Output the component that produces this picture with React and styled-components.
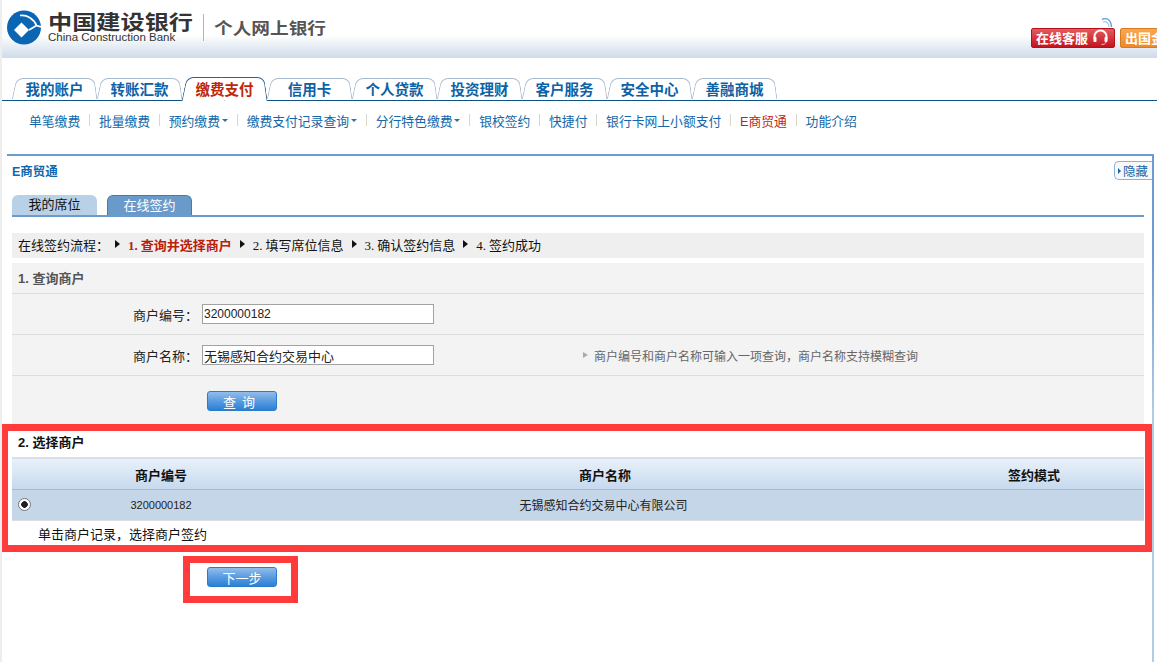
import React from "react";
import styled, { createGlobalStyle } from "styled-components";

const GlobalStyle = createGlobalStyle`
  html, body {
    margin: 0;
    padding: 0;
    background: #fff;
    overflow: hidden;
  }
  body {
    font-family: "Liberation Sans", "Noto Sans CJK SC", sans-serif;
    font-size: 13px;
    color: #222;
  }
`;

const Page = styled.div`
  width: 1155px;
  height: 662px;
  border-left: 2px solid #eee;
  overflow: hidden;
`;

const Header = styled.header`
  display: flex;
  height: 58px;
  background: linear-gradient(#fff 60%, #cedbe9);
`;

const Brand = styled.div`
  display: flex;
  align-items: flex-start;
  padding: 10px 0 0 5px;
`;

const BrandText = styled.div`
  width: 145px;
  margin-left: 7px;
  padding-top: 3px;
  display: flex;
  flex-direction: column;
`;

const BrandCn = styled.div`
  font-family: "Noto Sans CJK SC", sans-serif;
  font-size: 20px;
  line-height: 18px;
  font-weight: 700;
  color: #333;
  white-space: nowrap;
  transform: scaleX(1.208);
  transform-origin: left;
`;

const BrandEn = styled.div`
  margin-top: 1px;
  font-size: 11.5px;
  line-height: 10px;
  color: #333;
  white-space: nowrap;
`;

const BrandDivider = styled.div`
  width: 1px;
  height: 27px;
  margin: 4px 10px 0 10px;
  background: #b5b5b5;
`;

const BrandSub = styled.div`
  width: 112px;
  font-family: "Noto Sans CJK SC", sans-serif;
  font-size: 16px;
  line-height: 26px;
  margin-top: 4px;
  font-weight: 700;
  color: #555;
  white-space: nowrap;
  transform: scaleX(1.167);
  transform-origin: left;
`;

const Services = styled.div`
  position: relative;
  margin-left: auto;
  width: 126px;
  padding-top: 28px;
  display: flex;
  gap: 5px;
  overflow: hidden;
`;

const Signal = styled.svg`
  position: absolute;
  left: 70px;
  top: 17px;
`;

const ServiceBtn = styled.div`
  flex-shrink: 0;
  display: flex;
  align-items: center;
  gap: 4px;
  box-sizing: border-box;
  height: 20px;
  width: 84px;
  padding: 0 0 2px 4px;
  border: 1px solid ${(p) => (p.$orange ? "#d87a20" : "#b8101a")};
  border-radius: 2px;
  background: ${(p) =>
    p.$orange
      ? "linear-gradient(#f8a850, #ee8a28)"
      : "linear-gradient(#e45a5e, #c4141e)"};
  color: #fff;
  font-size: 13px;
  font-weight: 700;
  white-space: nowrap;
`;

const Tabs = styled.nav`
  display: flex;
  height: 22px;
  margin-top: 20px;
  padding-left: 10px;
  border-bottom: 1px solid #0f5288;
`;

const Tab = styled.a`
  position: relative;
  width: 85px;
  height: ${(p) => (p.$active ? "23px" : "22px")};
  line-height: 25px;
  text-align: center;
  font-size: 14.5px;
  font-weight: 700;
  color: ${(p) => (p.$active ? "#c0260c" : "#0b62a6")};
  z-index: ${(p) => (p.$active ? 1 : 0)};

  &::before,
  &::after {
    content: "";
    position: absolute;
    top: ${(p) => (p.$active ? "-1px" : "0")};
    bottom: ${(p) => (p.$active ? "0" : "1px")};
    width: 50%;
    box-sizing: border-box;
    border-top: 1px solid ${(p) => (p.$active ? "#2f5f8e" : "#a6bace")};
    background: #fff;
    z-index: -1;
  }
  &::before {
    left: 2px;
    border-left: 1px solid ${(p) => (p.$active ? "#2f5f8e" : "#a6bace")};
    border-top-left-radius: 7px;
    transform: skewX(-12deg);
  }
  &::after {
    right: 2px;
    border-right: 1px solid ${(p) => (p.$active ? "#2f5f8e" : "#a6bace")};
    border-top-right-radius: 7px;
    transform: skewX(8deg);
  }
`;

const SubNav = styled.div`
  display: flex;
  align-items: center;
  height: 38px;
  padding: 0 0 0 27px;
`;

const SubItem = styled.a`
  display: flex;
  align-items: center;
  font-size: 12.8px;
  color: ${(p) => (p.$active ? "#c0260c" : "#1467a8")};
  white-space: nowrap;
`;

const Caret = styled.i`
  width: 0;
  height: 0;
  margin-left: 2px;
  border-left: 3px solid transparent;
  border-right: 3px solid transparent;
  border-top: 3px solid #3a6f9e;
`;

const SubSep = styled.span`
  width: 1px;
  height: 12px;
  margin: 0 8.85px;
  background: linear-gradient(#cfd8e4, #e0d8b0);
`;

const Panel = styled.section`
  position: relative;
  box-sizing: border-box;
  width: 1147px;
  height: 600px;
  margin: 15px 0 0 5px;
  padding: 0 10px 0 5px;
  border-top: 2px solid #6c9bcc;

  &::after {
    content: "";
    position: absolute;
    top: 0;
    right: 0;
    bottom: 0;
    width: 2px;
    background: linear-gradient(#6c9bcc 100px, #b0cce8 260px);
  }
`;

const PanelTitle = styled.h2`
  margin: 0;
  height: 39px;
  line-height: 32px;
  font-size: 12.5px;
  font-weight: 700;
  color: #0f68ae;
`;

const HideBtn = styled.a`
  position: absolute;
  top: 5px;
  right: 2px;
  box-sizing: border-box;
  width: 38px;
  height: 19px;
  display: flex;
  align-items: center;
  padding-left: 3px;
  gap: 2px;
  border: 1px solid #8fb0d2;
  border-right: none;
  border-radius: 5px 0 0 5px;
  background: #f8f8f8;
  color: #1467a8;
  font-size: 12.5px;
`;

const HideArrow = styled.i`
  width: 0;
  height: 0;
  border-top: 3px solid transparent;
  border-bottom: 3px solid transparent;
  border-left: 3px solid #1467a8;
`;

const SubTabs = styled.div`
  display: flex;
  gap: 10px;
  height: 20px;
  border-bottom: 2px solid #6c9bcc;
`;

const SubTab = styled.a`
  box-sizing: border-box;
  width: 85px;
  height: 20px;
  line-height: 19px;
  text-align: center;
  border-radius: 6px 6px 0 0;
  background: ${(p) => (p.$active ? "#6a9aca" : "#b9d1e7")};
  border: ${(p) => (p.$active ? "1px solid #4a7ba8" : "none")};
  border-bottom: none;
  color: ${(p) => (p.$active ? "#fff" : "#111")};
`;

const Steps = styled.div`
  display: flex;
  align-items: center;
  height: 25px;
  margin-top: 16px;
  padding: 0 0 3px 6px;
  box-sizing: border-box;
  background: #efefef;
  color: #111;
  white-space: nowrap;
`;

const StepLead = styled.span`
  margin-right: -2px;
`;

const StepArrow = styled.i`
  width: 0;
  height: 0;
  margin: 0 8px;
  border-top: 4px solid transparent;
  border-bottom: 4px solid transparent;
  border-left: 5px solid #111;
`;

const Step = styled.span`
  color: ${(p) => (p.$current ? "#b8200a" : "#111")};
  font-weight: ${(p) => (p.$current ? 700 : 400)};
`;

const StepNum = styled.span`
  font-family: "Liberation Serif", serif;
  margin-right: 3px;
`;

const QuerySection = styled.div`
  height: 161px;
  margin-top: 5px;
  background: #f3f3f3;
`;

const SectionTitle = styled.h3`
  margin: 0;
  padding-left: 6px;
  font-size: 13px;
  font-weight: 700;
  color: ${(p) => (p.$muted ? "#555" : "#111")};
`;

const QueryTitle = styled(SectionTitle)`
  height: 30px;
  line-height: 32px;
  border-bottom: 1px solid #ddd;
`;

const FormRow = styled.div`
  display: flex;
  align-items: center;
  height: 40px;
  border-bottom: 1px solid #ddd;
`;

const FormLabel = styled.label`
  width: 186px;
  text-align: right;
  color: #222;
`;

const TextInput = styled.input`
  box-sizing: border-box;
  width: 232px;
  height: 20px;
  margin-left: 4px;
  padding: 0 1px;
  border: 1px solid #a2a2a2;
  background: #fff;
  color: #222;
  font-family: inherit;
  font-size: ${(p) => p.$size || "13px"};
  outline: none;
`;

const Hint = styled.div`
  display: flex;
  align-items: center;
  margin-left: 149px;
  color: #666;
  font-size: 12px;
`;

const HintArrow = styled.i`
  width: 0;
  height: 0;
  margin-right: 6px;
  border-top: 3px solid transparent;
  border-bottom: 3px solid transparent;
  border-left: 5px solid #aaa;
`;

const Button = styled.button`
  display: block;
  box-sizing: border-box;
  width: 70px;
  height: 20px;
  padding: 0 0 2px;
  border: 1px solid #2a7cc8;
  border-radius: 3px;
  background: linear-gradient(#93bdea, #5a9ce0 50%, #2a80d8);
  color: #fff;
  font-family: inherit;
  font-size: 13px;
  letter-spacing: ${(p) => p.$spacing || "0"};
`;

const QueryActions = styled.div`
  padding: 15px 0 0 195px;
`;

const SelectSection = styled.div`
  position: relative;
  height: 128px;
`;

const Highlight = styled.div`
  position: absolute;
  inset: 0 -8px 0 -11px;
  border: 7px solid #ff3b3b;
  pointer-events: none;
`;

const SelectTitle = styled(SectionTitle)`
  height: 33px;
  line-height: 38px;
`;

const TableRow = styled.div`
  display: grid;
  grid-template-columns: 24px 250px 638px 220px;
  align-items: center;
  text-align: center;
`;

const TableHead = styled(TableRow)`
  height: 30px;
  border-top: 2px solid #d8dfe8;
  border-bottom: 1px solid #a8bccf;
  background: linear-gradient(#e9f1fa, #c6d9ee);
  font-weight: 700;
  color: #111;
`;

const TableBody = styled(TableRow)`
  box-sizing: border-box;
  height: 31px;
  padding-bottom: 1px;
  border-bottom: 1px solid #ddd;
  background: #c5d6e8;
  font-size: 12px;
  color: #222;
`;

const MerchantId = styled.span`
  font-size: 11px;
`;

const MerchantName = styled.span`
  padding-right: 3px;
`;

const Radio = styled.span`
  box-sizing: border-box;
  justify-self: center;
  width: 13px;
  height: 13px;
  border: 1px solid #777;
  border-radius: 50%;
  background: radial-gradient(circle, #222 0 3px, #fff 3.6px);
`;

const TableNote = styled.div`
  padding-left: 26px;
  line-height: 28px;
  font-size: 13px;
  color: #111;
`;

const NextBox = styled.div`
  box-sizing: border-box;
  width: 115px;
  height: 47px;
  margin: 4px 0 0 171px;
  padding: 4px 0 0 17px;
  border: 7px solid #ff3b3b;
`;

const tabs = ["我的账户", "转账汇款", "缴费支付", "信用卡", "个人贷款", "投资理财", "客户服务", "安全中心", "善融商城"];

const subItems = [
  { label: "单笔缴费" },
  { label: "批量缴费" },
  { label: "预约缴费", caret: true },
  { label: "缴费支付记录查询", caret: true },
  { label: "分行特色缴费", caret: true },
  { label: "银校签约" },
  { label: "快捷付" },
  { label: "银行卡网上小额支付" },
  { label: "E商贸通", active: true },
  { label: "功能介绍" },
];

const steps = ["填写席位信息", "确认签约信息", "签约成功"];

const Logo = () => (
  <svg width="34" height="35" viewBox="0 0 34 35">
    <circle cx="17" cy="17.5" r="17" fill="#0a66b2" />
    <path d="M14.5 12.5 L22 20 L14.5 27.5 L7 20 Z" fill="#fff" />
    <path d="M13 5.5 C20 4.5 27 9 29.5 15.5 L34 17 M29.5 15.5 L22 20" fill="none" stroke="#fff" strokeWidth="1.7" />
  </svg>
);

const Headset = () => (
  <svg width="17" height="17" viewBox="0 0 17 17" fill="none">
    <path d="M2.5 10V7.5a6 6 0 0 1 12 0V10" stroke="#fff" strokeWidth="2" />
    <rect x="1.5" y="8" width="3" height="5" rx="1" fill="#fff" />
    <rect x="12.5" y="8" width="3" height="5" rx="1" fill="#fff" />
    <path d="M14 13c-.5 1.8-2 2.5-4.5 2.5" stroke="#f6c0c0" strokeWidth="1" />
  </svg>
);

export default function App() {
  return (
    <>
      <GlobalStyle />
      <Page>
        <Header>
          <Brand>
            <Logo />
            <BrandText>
              <BrandCn>中国建设银行</BrandCn>
              <BrandEn>China Construction Bank</BrandEn>
            </BrandText>
            <BrandDivider />
            <BrandSub>个人网上银行</BrandSub>
          </Brand>
          <Services>
            <Signal width="12" height="11" viewBox="0 0 12 11" fill="none">
              <path d="M1 2.5C5 .5 10 2 10.5 10" stroke="#5a9ce0" strokeWidth="1.4" />
              <path d="M2 5C5 4 8 6 8 10" stroke="#9cc4ec" strokeWidth="1.2" />
            </Signal>
            <ServiceBtn>
              在线客服
              <Headset />
            </ServiceBtn>
            <ServiceBtn $orange>出国金融</ServiceBtn>
          </Services>
        </Header>

        <Tabs>
          {tabs.map((t) => (
            <Tab key={t} $active={t === "缴费支付"}>
              {t}
            </Tab>
          ))}
        </Tabs>

        <SubNav>
          {subItems.map((item, i) => (
            <React.Fragment key={item.label}>
              {i > 0 && <SubSep />}
              <SubItem $active={item.active}>
                {item.label}
                {item.caret && <Caret />}
              </SubItem>
            </React.Fragment>
          ))}
        </SubNav>

        <Panel>
          <PanelTitle>E商贸通</PanelTitle>
          <HideBtn>
            <HideArrow />
            隐藏
          </HideBtn>
          <SubTabs>
            <SubTab>我的席位</SubTab>
            <SubTab $active>在线签约</SubTab>
          </SubTabs>

          <Steps>
            <StepLead>在线签约流程：</StepLead>
            <StepArrow />
            <Step $current>
              <StepNum>1.</StepNum>查询并选择商户
            </Step>
            {steps.map((s, i) => (
              <React.Fragment key={s}>
                <StepArrow />
                <Step>
                  <StepNum>{i + 2}.</StepNum>
                  {s}
                </Step>
              </React.Fragment>
            ))}
          </Steps>

          <QuerySection>
            <QueryTitle $muted>1. 查询商户</QueryTitle>
            <FormRow>
              <FormLabel>商户编号：</FormLabel>
              <TextInput $size="12px" defaultValue="3200000182" />
            </FormRow>
            <FormRow>
              <FormLabel>商户名称：</FormLabel>
              <TextInput defaultValue="无锡感知合约交易中心" />
              <Hint>
                <HintArrow />
                商户编号和商户名称可输入一项查询，商户名称支持模糊查询
              </Hint>
            </FormRow>
            <QueryActions>
              <Button $spacing="6px">查询</Button>
            </QueryActions>
          </QuerySection>

          <SelectSection>
            <SelectTitle>2. 选择商户</SelectTitle>
            <TableHead>
              <span />
              <span>商户编号</span>
              <span>商户名称</span>
              <span>签约模式</span>
            </TableHead>
            <TableBody>
              <Radio />
              <MerchantId>3200000182</MerchantId>
              <MerchantName>无锡感知合约交易中心有限公司</MerchantName>
              <span />
            </TableBody>
            <TableNote>单击商户记录，选择商户签约</TableNote>
            <Highlight />
          </SelectSection>

          <NextBox>
            <Button>下一步</Button>
          </NextBox>
        </Panel>
      </Page>
    </>
  );
}
